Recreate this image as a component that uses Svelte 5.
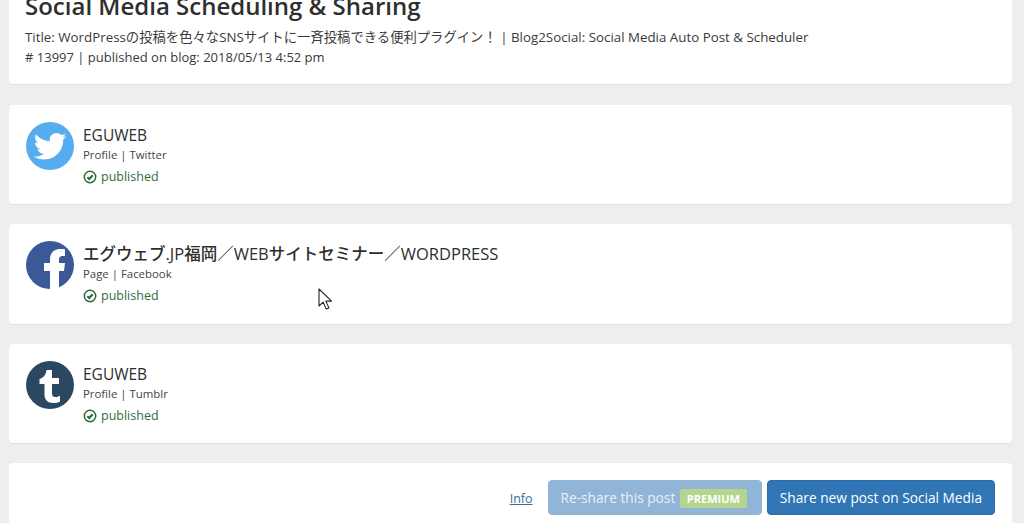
<script>
  const accounts = [
    { name: 'EGUWEB', kind: 'Profile | Twitter', net: 'twitter' },
    { name: 'エグウェブ.JP福岡／WEBサイトセミナー／WORDPRESS', kind: 'Page | Facebook', net: 'facebook', strong: true },
    { name: 'EGUWEB', kind: 'Profile | Tumblr', net: 'tumblr' }
  ];
</script>

<div class="page">
  <section class="card head">
    <h1>Social Media Scheduling &amp; Sharing</h1>
    <p class="title-line">Title: WordPressの投稿を色々なSNSサイトに一斉投稿できる便利プラグイン！ | Blog2Social: Social Media Auto Post &amp; Scheduler</p>
    <p># 13997 | published on blog: 2018/05/13 4:52 pm</p>
  </section>

  {#each accounts as a}
    <section class="card account">
      <svg class="logo" viewBox="0 0 48 48" aria-hidden="true">
        {#if a.net === 'twitter'}
          <circle cx="24" cy="24" r="24" fill="#55acee" />
          <path transform="translate(-2.400 -2) scale(1.100)" fill="#fff" d="M39 14.600c-1.100.5-2.300.8-3.500 1 1.300-.8 2.200-2 2.700-3.400-1.200.7-2.500 1.200-3.900 1.500-1.100-1.200-2.700-1.900-4.500-1.900-3.400 0-6.100 2.700-6.100 6.100 0 .5.100.9.200 1.400-5.100-.3-9.600-2.700-12.600-6.400-.5.900-.8 2-.8 3.100 0 2.100 1.100 4 2.700 5.100-1 0-1.900-.3-2.800-.8v.1c0 3 2.100 5.400 4.900 6-.5.100-1 .2-1.600.2-.4 0-.8 0-1.100-.1.800 2.400 3 4.200 5.700 4.200-2.100 1.600-4.700 2.600-7.600 2.600-.5 0-1 0-1.500-.1 2.700 1.700 5.900 2.700 9.400 2.700 11.300 0 17.400-9.300 17.400-17.400v-.8c1.200-.8 2.200-1.900 3-3.100z" />
        {:else if a.net === 'facebook'}
          <circle cx="24" cy="24" r="24" fill="#3b5998" />
          <path fill="#fff" d="M33 48V30h5l1-8h-6v-3.500c0-2.300 1-3.500 3.500-3.500H39V8.300c-1-.1-2.500-.3-4.500-.3-6 0-10.500 3.500-10.500 10v4h-6v8h6v18z" />
        {:else}
          <circle cx="24" cy="24" r="24" fill="#2c4762" />
          <path fill="#fff" d="M26 9v8h7v6h-7v9c0 3 1 4 3.500 4 1.300 0 2.800-.4 4.500-1.300v5.800c-2 1-3.800 1.500-6.500 1.500-5.800 0-9-3-9-8.500V23h-5v-5c4.500-1.300 6.500-5 7-9z" />
        {/if}
      </svg>
      <div class="info">
        <div class="name" class:strong={a.strong}>{a.name}</div>
        <div class="kind">{a.kind}</div>
        <div class="status">
          <svg class="check" viewBox="0 0 14 14" aria-hidden="true">
            <circle cx="7" cy="7" r="5.700" fill="none" stroke="#2d6a3e" stroke-width="1.500" />
            <path d="M4.300 7.200 6.200 9l3.500-3.800" fill="none" stroke="#2d6a3e" stroke-width="2" />
          </svg>
          published
        </div>
      </div>
    </section>
  {/each}

  <section class="card actions">
    <a href="#info" class="info-link">Info</a>
    <button class="btn disabled" type="button">Re-share this post <span class="badge">PREMIUM</span></button>
    <button class="btn primary" type="button">Share new post on Social Media</button>
  </section>

  <svg class="cursor" width="15" height="23" viewBox="0 0 15 23" aria-hidden="true">
    <path d="M1 1v17l4.200-3.900 3 7 2.700-1.200-3-6.800h5.600z" fill="#fff" stroke="#222" stroke-width="1.100" stroke-linejoin="round" />
  </svg>
</div>

<style>
  :global(body) {
    margin: 0;
    background: #eeeeee;
  }
  .page {
    position: relative;
    height: 523px;
    overflow: hidden;
    padding: 0 12px 0 9px;
    display: flex;
    flex-direction: column;
    gap: 20px;
    box-sizing: border-box;
    font-family: "Open Sans", "Noto Sans CJK JP", sans-serif;
    color: #333;
  }
  .card {
    background: #fff;
    border-radius: 4px;
    box-shadow: 0 1px 1px rgba(0, 0, 0, 0.06);
    flex: none;
  }
  .head {
    height: 84px;
    margin-bottom: 1px;
    padding: 0 16px;
    box-sizing: border-box;
    border-radius: 0 0 4px 4px;
  }
  h1 {
    margin: -9px 0 0;
    font-size: 24px;
    line-height: 30px;
    font-weight: 600;
    color: #2f2f2f;
  }
  .head h1 + p {
    margin-top: 6px;
  }
  p {
    margin: 0;
    font-size: 13px;
    line-height: 20px;
    color: #3a3a3a;
  }
  .head .title-line {
    font-size: 13.330px;
  }
  .account {
    height: 99.400px;
    padding: 17px;
    box-sizing: border-box;
    display: flex;
    gap: 9px;
  }
  .logo {
    width: 48px;
    height: 48px;
    flex: none;
  }
  .info {
    margin-top: 3px;
  }
  .name {
    font-size: 15.500px;
    line-height: 20px;
    color: #2e2e2e;
  }
  .name.strong {
    font-size: 16.500px;
    font-weight: 500;
  }
  .kind {
    font-size: 11.400px;
    line-height: 20px;
    color: #444;
  }
  .status {
    font-size: 12.500px;
    line-height: 24px;
    color: #2f6b3f;
    display: flex;
    align-items: center;
    gap: 4px;
  }
  .check {
    width: 14px;
    height: 14px;
  }
  .actions {
    height: 70px;
    padding: 17px 17px 0 0;
    box-sizing: border-box;
    display: flex;
    justify-content: flex-end;
    align-items: flex-start;
    border-radius: 4px 4px 0 0;
  }
  .info-link {
    font-size: 12.500px;
    line-height: 38px;
    color: #3b6f97;
    margin-right: 15px;
  }
  .btn {
    height: 35px;
    padding: 0 12px;
    border: 1px solid #2a6ca8;
    border-radius: 4px;
    font: inherit;
    font-size: 13.700px;
    color: #fff;
    white-space: nowrap;
  }
  .primary {
    background: #3076b5;
    margin-left: 5px;
  }
  .disabled {
    background: #91b5d6;
    border-color: #91b5d6;
    color: #e9f0f6;
    padding-right: 14px;
  }
  .badge {
    display: inline-block;
    background: #b5d48d;
    color: #fff;
    font-size: 11px;
    font-weight: 700;
    line-height: 19px;
    padding: 0 7px;
    border-radius: 2px;
    margin-left: 1px;
  }
  .cursor {
    position: absolute;
    left: 318px;
    top: 288px;
  }
</style>
